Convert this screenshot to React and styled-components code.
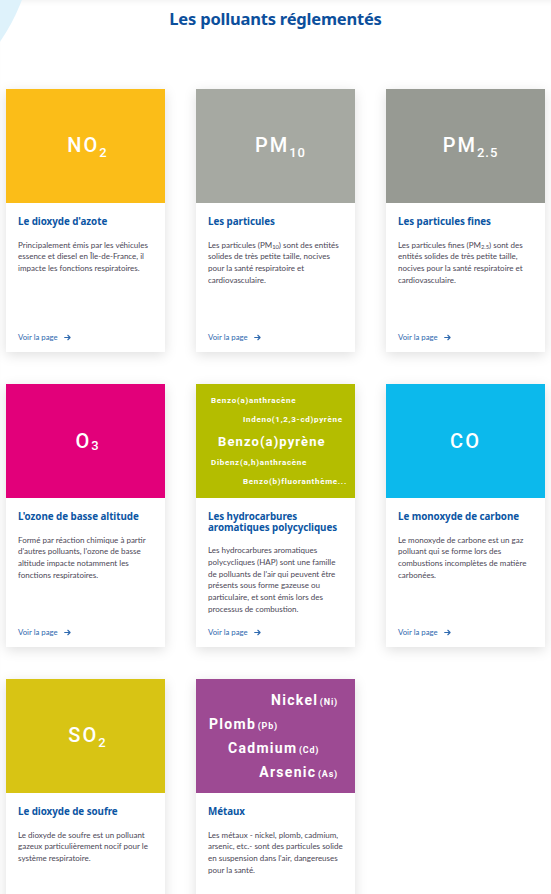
import React from "react";
import styled, { createGlobalStyle } from "styled-components";

const Global = createGlobalStyle`
  html, body { margin: 0; padding: 0; background: #fff; }
  body { font-family: "Lato", "Liberation Sans", sans-serif; }
  * { box-sizing: border-box; }
`;

const Page = styled.div`
  position: relative;
  isolation: isolate;
  width: 551px;
  min-height: 894px;
  overflow: hidden;
  padding: 0 6px 40px;
  box-shadow: inset 0 5px 5px -3px rgba(0, 0, 0, 0.05);
`;

const Swoosh = styled.div`
  position: absolute;
  left: -348px;
  top: -258px;
  width: 382px;
  height: 382px;
  border-radius: 50%;
  background: #def2fb;
  z-index: -1;
`;

const Title = styled.h1`
  margin: 0;
  padding-top: 7px;
  height: 89px;
  text-align: center;
  font-family: "Noto Sans", "DejaVu Sans", sans-serif;
  font-weight: 700;
  font-size: 16.5px;
  letter-spacing: -0.2px;
  color: #0c4f9c;
`;

const Grid = styled.div`
  display: grid;
  grid-template-columns: repeat(3, 159px);
  column-gap: 31px;
  row-gap: 32px;
`;

const Card = styled.div`
  display: flex;
  flex-direction: column;
  height: 263px;
  background: #fff;
  box-shadow: 0 3px 12px rgba(0, 0, 0, 0.13);
`;

const Visual = styled.div`
  height: 114px;
  flex: none;
  background: ${(p) => p.$bg};
  color: #fff;
  display: flex;
  align-items: center;
  justify-content: center;
  font-family: "Roboto", "Liberation Sans", sans-serif;
`;

const Formula = styled.div`
  font-size: 20px;
  font-weight: 500;
  letter-spacing: 2px;
  margin-left: ${(p) => p.$shift || 0}px;
  sub {
    font-size: 13px;
    vertical-align: ${(p) => p.$drop ?? -5}px;
    letter-spacing: 1px;
  }
`;

const Body = styled.div`
  flex: 1;
  display: flex;
  flex-direction: column;
  padding: 14px 12px 10px;
`;

const CardTitle = styled.h2`
  margin: 0 0 12px;
  font-family: "Noto Sans", "DejaVu Sans", sans-serif;
  font-weight: 700;
  font-size: 9.8px;
  line-height: 10.5px;
  letter-spacing: -0.05px;
  color: #0b55a3;
`;

const Desc = styled.p`
  margin: 0;
  font-family: "Lato", "Liberation Sans", sans-serif;
  font-size: 8px;
  line-height: 11.8px;
  color: #4b4756;
  sub {
    font-size: 5.8px;
    line-height: 0;
    vertical-align: -1px;
  }
`;

const Link = styled.a`
  margin-top: auto;
  display: flex;
  align-items: center;
  gap: 6px;
  font-family: "Lato", "Liberation Sans", sans-serif;
  font-size: 7.8px;
  color: #2d68ae;
  text-decoration: none;
  svg { width: 7px; height: 7px; }
`;

const Cloud = styled.div`
  width: 100%;
  height: 100%;
  display: flex;
  flex-direction: column;
  justify-content: center;
  padding: ${(p) => p.$pad};
  gap: ${(p) => p.$gap}px;
`;

const Word = styled.div`
  font-weight: 700;
  white-space: nowrap;
  font-size: ${(p) => p.$size}px;
  letter-spacing: ${(p) => p.$ls}px;
  text-align: ${(p) => p.$align || "left"};
  padding-left: ${(p) => p.$indent || 0}px;
  line-height: 1;
  small {
    font-size: ${(p) => p.$size * 0.64}px;
    letter-spacing: 0.8px;
    margin-left: 1.5px;
  }
`;

const Arrow = () => (
  <svg viewBox="0 0 10 10" fill="none" stroke="currentColor" strokeWidth="1.6" strokeLinecap="round" strokeLinejoin="round">
    <path d="M1 5h7.5M5.5 1.8 8.7 5 5.5 8.2" />
  </svg>
);

const cards = [
  {
    bg: "#fbbd18",
    visual: <Formula $shift={4}>NO<sub>2</sub></Formula>,
    title: "Le dioxyde d'azote",
    desc: "Principalement émis par les véhicules essence et diesel en Île-de-France, il impacte les fonctions respiratoires.",
  },
  {
    bg: "#a6a9a2",
    visual: <Formula $shift={10}>PM<sub>10</sub></Formula>,
    title: "Les particules",
    desc: (
      <>
        Les particules (PM<sub>10</sub>) sont des entités solides de très petite taille, nocives pour la santé respiratoire et cardiovasculaire.
      </>
    ),
  },
  {
    bg: "#979a93",
    visual: <Formula $shift={10}>PM<sub>2.5</sub></Formula>,
    title: "Les particules fines",
    desc: (
      <>
        Les particules fines (PM<sub>2.5</sub>) sont des entités solides de très petite taille, nocives pour la santé respiratoire et cardiovasculaire.
      </>
    ),
  },
  {
    bg: "#e2007a",
    visual: <Formula $shift={4} $drop={-2}>O<sub>3</sub></Formula>,
    title: "L'ozone de basse altitude",
    desc: "Formé par réaction chimique à partir d'autres polluants, l'ozone de basse altitude impacte notamment les fonctions respiratoires.",
  },
  {
    bg: "#b4bd00",
    visual: (
      <Cloud $pad="0 6px 0 15px" $gap={11}>
        <Word $size={8} $ls={0.7}>Benzo(a)anthracène</Word>
        <Word $size={8} $ls={0.7} $indent={32}>Indeno(1,2,3-cd)pyrène</Word>
        <Word $size={13} $ls={1.1} $indent={7}>Benzo(a)pyrène</Word>
        <Word $size={8} $ls={0.7}>Dibenz(a,h)anthracène</Word>
        <Word $size={8} $ls={0.7} $indent={32}>Benzo(b)fluoranthème...</Word>
      </Cloud>
    ),
    title: "Les hydrocarbures aromatiques polycycliques",
    desc: "Les hydrocarbures aromatiques polycycliques (HAP) sont une famille de polluants de l'air qui peuvent être présents sous forme gazeuse ou particulaire, et sont émis lors des processus de combustion.",
  },
  {
    bg: "#0cb9ec",
    visual: <Formula>CO</Formula>,
    title: "Le monoxyde de carbone",
    desc: "Le monoxyde de carbone est un gaz polluant qui se forme lors des combustions incomplètes de matière carbonées.",
  },
  {
    bg: "#d8c414",
    visual: <Formula $shift={4}>SO<sub>2</sub></Formula>,
    title: "Le dioxyde de soufre",
    desc: "Le dioxyde de soufre est un polluant gazeux particulièrement nocif pour le système respiratoire.",
  },
  {
    bg: "#9d4a93",
    visual: (
      <Cloud $pad="0 17px 0 13px" $gap={10}>
        <Word $size={14} $ls={1.3} $align="right">Nickel<small>(Ni)</small></Word>
        <Word $size={14} $ls={1.3}>Plomb<small>(Pb)</small></Word>
        <Word $size={14} $ls={1.3} $indent={19}>Cadmium<small>(Cd)</small></Word>
        <Word $size={14} $ls={1.3} $align="right">Arsenic<small>(As)</small></Word>
      </Cloud>
    ),
    title: "Métaux",
    desc: "Les métaux - nickel, plomb, cadmium, arsenic, etc.- sont des particules solide en suspension dans l'air, dangereuses pour la santé.",
  },
];

export default function App() {
  return (
    <>
      <Global />
      <Page>
        <Swoosh />
        <Title>Les polluants réglementés</Title>
        <Grid>
          {cards.map((c, i) => (
            <Card key={i}>
              <Visual $bg={c.bg}>{c.visual}</Visual>
              <Body>
                <CardTitle>{c.title}</CardTitle>
                <Desc>{c.desc}</Desc>
                <Link href="#">
                  Voir la page <Arrow />
                </Link>
              </Body>
            </Card>
          ))}
        </Grid>
      </Page>
    </>
  );
}
